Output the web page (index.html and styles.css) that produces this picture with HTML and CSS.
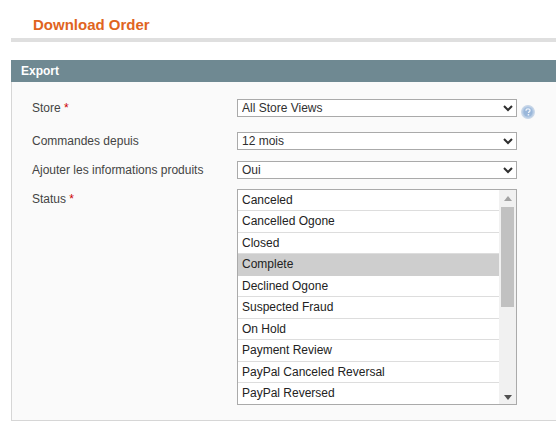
FILE: index.html
```html
<!DOCTYPE html>
<html lang="en">
<head>
    <meta charset="UTF-8">
    <meta name="viewport" content="width=device-width, initial-scale=1.0">
    <title>Download Order</title>
    <link rel="stylesheet" href="styles.css">
</head>
<body>
    <div class="page-head">
        <h3>Download Order</h3>
    </div>

    <div class="section-head">Export</div>
    <div class="fieldset">
        <div class="row row-store">
            <label>Store <span class="required">*</span></label>
            <select class="field"><option>All Store Views</option></select>
            <svg class="help" width="14" height="14" viewBox="0 0 14 14">
                <circle cx="7" cy="7" r="6.4" fill="#b4cae4" stroke="#c9d7e8" stroke-width="1.1"/>
                <circle cx="7" cy="7" r="4.6" fill="#9ab7da"/>
                <path d="M5 5.7c0-1.2.9-1.8 2-1.8s2 .6 2 1.6c0 1.3-1.5 1.4-1.5 2.6" fill="none" stroke="#eef3fa" stroke-width="1.3"/>
                <rect x="6.7" y="9" width="1.5" height="1.5" fill="#eef3fa"/>
            </svg>
        </div>
        <div class="row row-since">
            <label>Commandes depuis</label>
            <select class="field"><option>12 mois</option></select>
        </div>
        <div class="row row-products">
            <label>Ajouter les informations produits</label>
            <select class="field"><option>Oui</option></select>
        </div>
        <div class="row">
            <label class="label-status">Status <span class="required">*</span></label>
            <div class="listbox">
                <ul class="options">
                    <li>Canceled</li>
                    <li>Cancelled Ogone</li>
                    <li>Closed</li>
                    <li class="selected">Complete</li>
                    <li>Declined Ogone</li>
                    <li>Suspected Fraud</li>
                    <li>On Hold</li>
                    <li>Payment Review</li>
                    <li>PayPal Canceled Reversal</li>
                    <li>PayPal Reversed</li>
                </ul>
                <div class="scrollbar">
                    <span class="arrow-up"></span>
                    <div class="thumb"></div>
                    <span class="arrow-down"></span>
                </div>
            </div>
        </div>
    </div>
</body>
</html>
```

FILE: styles.css
```css
body {
    margin: 0;
    padding: 0 0 10px 11px;
    background-color: #fff;
    font-family: "Liberation Sans", Arial, sans-serif;
    font-size: 12px;
    color: #444;
    overflow: hidden;
}
.page-head {
    height: 38px;
    border-bottom: 4px solid #dfdfdf;
    margin-bottom: 18px;
}
.page-head h3 {
    margin: 0;
    padding: 16px 0 0 22px;
    font-size: 15px;
    line-height: 18px;
    color: #e0641e;
}
.section-head {
    height: 22px;
    line-height: 22px;
    padding-left: 10px;
    background-color: #6f8992;
    color: #fff;
    font-size: 12px;
    font-weight: bold;
}
.fieldset {
    height: 321px;
    padding-top: 17px;
    background-color: #fafafa;
    border-left: 1px solid #d6d6d6;
    border-bottom: 1px solid #d6d6d6;
}
.row {
    display: flex;
    align-items: flex-start;
    padding-left: 20px;
}
.row-store {
    margin-bottom: 13px;
}
.row-since {
    margin-bottom: 11px;
}
.row-products {
    margin-bottom: 10px;
}
.row label {
    width: 205px;
    line-height: 18px;
    color: #444;
}
.row .label-status {
    padding-top: 1px;
}
.required {
    color: #c00;
}
.field {
    width: 280px;
    height: 18px;
    padding: 0;
    background-color: #fff;
    border: 1px solid #aaa;
    border-radius: 0;
    font-family: inherit;
    font-size: 12px;
    color: #2f2f2f;
}
.help {
    margin: 6px 0 0 4px;
}
.listbox {
    display: flex;
    width: 280px;
    height: 216px;
    box-sizing: border-box;
    background-color: #fff;
    border: 1px solid #aaa;
}
.options {
    flex: 1;
    margin: -0.5px 0 0;
    padding: 0;
    list-style: none;
    color: #222;
}
.options li {
    height: 21.5px;
    line-height: 20.5px;
    box-sizing: border-box;
    padding-left: 4px;
    border-bottom: 1px solid #ddd;
}
.options li:last-child {
    border-bottom: none;
}
.options .selected {
    background-color: #cecece;
    border-bottom-color: #cecece;
}
.scrollbar {
    display: flex;
    flex-direction: column;
    align-items: center;
    width: 17px;
    background-color: #f1f1f1;
}
.thumb {
    width: 13px;
    height: 100px;
    margin-top: 6px;
    background-color: #c1c1c1;
}
.arrow-up {
    margin-top: 6px;
    border-left: 4px solid transparent;
    border-right: 4px solid transparent;
    border-bottom: 5px solid #a3a3a3;
}
.arrow-down {
    margin-top: auto;
    margin-bottom: 4px;
    border-left: 4px solid transparent;
    border-right: 4px solid transparent;
    border-top: 5px solid #505050;
}
```
